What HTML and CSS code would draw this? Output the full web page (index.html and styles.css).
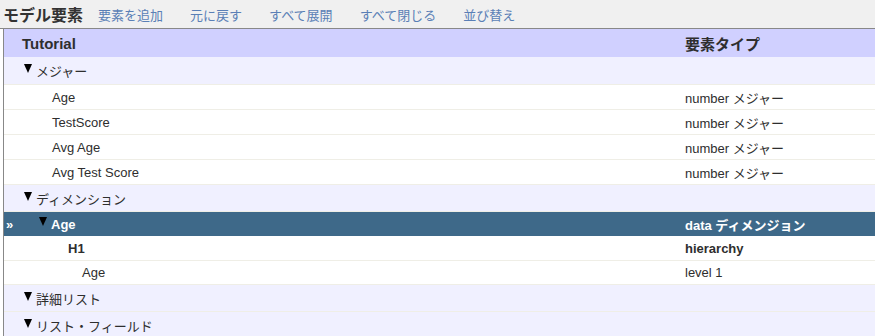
FILE: index.html
```html
<!DOCTYPE html>
<html lang="ja">

<head>
    <meta charset="UTF-8">
    <meta name="viewport" content="width=device-width, initial-scale=1.0">
    <title>モデル要素</title>
    <link rel="stylesheet" href="styles.css">
</head>

<body>
    <div class="toolbar">
        <span class="title">モデル要素</span>
        <a class="tool">要素を追加</a>
        <a class="tool">元に戻す</a>
        <a class="tool">すべて展開</a>
        <a class="tool">すべて閉じる</a>
        <a class="tool">並び替え</a>
    </div>
    <div class="tree">
        <div class="row head">
            <div class="name lv0">Tutorial</div>
            <div class="type">要素タイプ</div>
        </div>
        <div class="row cat first">
            <div class="name lv0"><span class="tri"></span>メジャー</div>
            <div class="type"></div>
        </div>
        <div class="row item">
            <div class="name lv1">Age</div>
            <div class="type">number メジャー</div>
        </div>
        <div class="row item">
            <div class="name lv1">TestScore</div>
            <div class="type">number メジャー</div>
        </div>
        <div class="row item">
            <div class="name lv1">Avg Age</div>
            <div class="type">number メジャー</div>
        </div>
        <div class="row item">
            <div class="name lv1">Avg Test Score</div>
            <div class="type">number メジャー</div>
        </div>
        <div class="row cat">
            <div class="name lv0"><span class="tri"></span>ディメンション</div>
            <div class="type"></div>
        </div>
        <div class="row item selected">
            <div class="name"><span class="mark">»</span><span class="tri"></span>Age</div>
            <div class="type">data ディメンジョン</div>
        </div>
        <div class="row item bold">
            <div class="name lv2">H1</div>
            <div class="type">hierarchy</div>
        </div>
        <div class="row item level">
            <div class="name lv3">Age</div>
            <div class="type">level 1</div>
        </div>
        <div class="row cat">
            <div class="name lv0"><span class="tri"></span>詳細リスト</div>
            <div class="type"></div>
        </div>
        <div class="row cat">
            <div class="name lv0"><span class="tri"></span>リスト・フィールド</div>
            <div class="type"></div>
        </div>
    </div>
</body>

</html>
```

FILE: styles.css
```css
* {
    margin: 0;
    padding: 0;
    box-sizing: border-box;
}

body {
    font-family: "Liberation Sans", "Noto Sans CJK JP", sans-serif;
    font-size: 13px;
    color: #2e2e2e;
    background: #fff;
    overflow: hidden;
}

/* 上のツールバー */
.toolbar {
    display: flex;
    align-items: center;
    height: 29px;
    padding-left: 3px;
    background: #f0f0f0;
    border-bottom: 1px solid #888;
}

.toolbar .title {
    font-size: 16px;
    font-weight: bold;
    color: #333;
    margin-right: 15px;
}

.toolbar .tool {
    color: #5a7fb6;
    margin-right: 27px;
    cursor: pointer;
}

/* ツリー */
.tree {
    margin-left: 3px;
    border-left: 1px solid #888;
}

.row {
    display: grid;
    grid-template-columns: 681px 1fr;
    align-items: center;
    border-bottom: 1px solid #efeee6;
}

.row.head {
    height: 28px;
    background: #d0d0ff;
    border-bottom: none;
    font-size: 15px;
    font-weight: bold;
}

.row.cat {
    height: 27px;
    background: #f0f0ff;
}

.row.cat.first {
    height: 28px;
}

.row.item {
    height: 25px;
}

.row.level {
    height: 24px;
}

.row.bold {
    font-weight: bold;
}

.row.selected {
    height: 24px;
    background: #3e6989;
    color: #fff;
    font-weight: bold;
    border-bottom: none;
}

.lv0 {
    padding-left: 19px;
}

.lv1 {
    padding-left: 48px;
}

.lv2 {
    padding-left: 64px;
}

.lv3 {
    padding-left: 78px;
}

.row.head .lv0 {
    padding-left: 18px;
}

.tri {
    display: inline-block;
    width: 0;
    height: 0;
    margin-left: 1px;
    margin-right: 4px;
    border-left: 4.5px solid transparent;
    border-right: 4.5px solid transparent;
    border-top: 9px solid #000;
    vertical-align: 3px;
}

.selected .name {
    padding-left: 2px;
}

.selected .mark {
    display: inline-block;
    width: 33px;
}

.selected .tri {
    margin-left: 0;
    margin-right: 4px;
}
```
